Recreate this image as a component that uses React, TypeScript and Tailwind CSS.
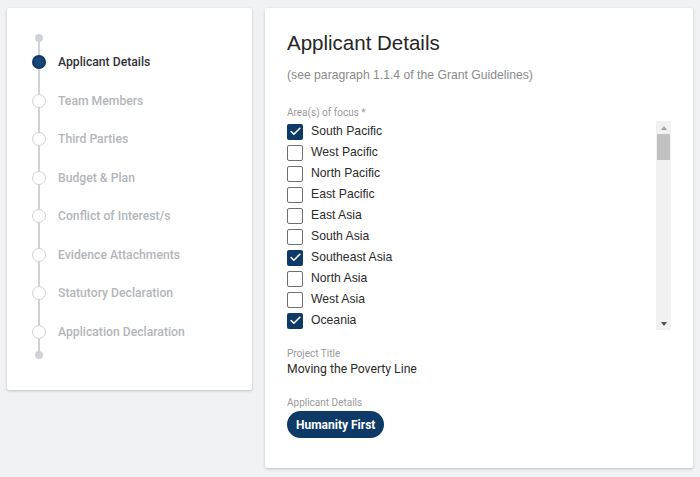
import { Check } from 'lucide-react'

const steps = [
  'Applicant Details',
  'Team Members',
  'Third Parties',
  'Budget & Plan',
  'Conflict of Interest/s',
  'Evidence Attachments',
  'Statutory Declaration',
  'Application Declaration',
]

const areas = [
  { name: 'South Pacific', checked: true },
  { name: 'West Pacific', checked: false },
  { name: 'North Pacific', checked: false },
  { name: 'East Pacific', checked: false },
  { name: 'East Asia', checked: false },
  { name: 'South Asia', checked: false },
  { name: 'Southeast Asia', checked: true },
  { name: 'North Asia', checked: false },
  { name: 'West Asia', checked: false },
  { name: 'Oceania', checked: true },
]

function Stepper() {
  return (
    <div className="relative pl-[25px] pt-[26px] pb-[31px]">
      {/* Track */}
      <div className="absolute left-[31px] top-[29px] bottom-[35px] w-[2px] bg-[#cfd3d8]" />

      <div className="relative flex w-[14px] justify-center">
        <span className="h-[8px] w-[8px] rounded-full bg-[#cfd3d8]" />
      </div>

      <ul className="relative mt-[1px]">
        {steps.map((step, i) => (
          <li key={step} className="flex h-[38.5px] items-center gap-[12px]">
            <span className="flex w-[14px] justify-center">
              {i === 0 ? (
                <span className="h-[14px] w-[14px] rounded-full border-[2px] border-[#0c3766] bg-[#174877]" />
              ) : (
                <span className="h-[14px] w-[14px] rounded-full border-[1.5px] border-[#cfd3d8] bg-white" />
              )}
            </span>
            <span
              className={
                i === 0
                  ? 'text-[12.2px] font-medium text-[#2f3236]'
                  : 'text-[12.2px] font-medium text-[#b3b6ba]'
              }
            >
              {step}
            </span>
          </li>
        ))}
      </ul>

      <div className="relative flex w-[14px] justify-center">
        <span className="h-[8px] w-[8px] rounded-full bg-[#cfd3d8]" />
      </div>
    </div>
  )
}

function Checkbox({ checked }: { checked: boolean }) {
  if (checked) {
    return (
      <span className="flex h-[16px] w-[16px] items-center justify-center rounded-[2px] bg-[#0e3a68]">
        <Check className="h-[13px] w-[13px] text-white" strokeWidth={3} />
      </span>
    )
  }
  return <span className="h-[16px] w-[16px] rounded-[2px] border-[1.5px] border-[#6f6f6f] bg-white" />
}

function FakeScrollbar() {
  return (
    <div className="flex w-[15px] flex-col bg-[#f1f1f1]">
      <div className="flex h-[13px] items-center justify-center">
        <span className="h-0 w-0 border-x-[3.5px] border-b-[4px] border-x-transparent border-b-[#a3a3a3]" />
      </div>
      <div className="mx-[1px] h-[26px] bg-[#c1c1c1]" />
      <div className="flex-1" />
      <div className="flex h-[13px] items-center justify-center">
        <span className="h-0 w-0 border-x-[3.5px] border-t-[4px] border-x-transparent border-t-[#505050]" />
      </div>
    </div>
  )
}

export default function App() {
  return (
    <div className="flex min-h-[477px] items-start gap-[13px] bg-[#f1f2f4] px-[7px] pt-[8px] font-['Roboto',sans-serif]">
      {/* Steps */}
      <aside className="w-[245px] rounded-[2px] bg-white shadow-[0_1px_3px_rgba(0,0,0,0.22)]">
        <Stepper />
      </aside>

      {/* Form */}
      <main className="w-[428px] rounded-[2px] bg-white px-[22px] pt-[22px] pb-[30px] shadow-[0_1px_3px_rgba(0,0,0,0.22)]">
        <h1 className="font-['Liberation_Sans',Arial,sans-serif] text-[20.5px] leading-[26px] text-[#262626]">
          Applicant Details
        </h1>
        <p className="mt-[11px] font-['Liberation_Sans',Arial,sans-serif] text-[12.2px] leading-[16px] text-[#8a8a8a]">
          (see paragraph 1.1.4 of the Grant Guidelines)
        </p>

        <label className="mt-[24px] block text-[10px] leading-[12px] text-[#9a9a9a]">Area(s) of focus *</label>
        <div className="mt-[2px] flex h-[209px]">
          <ul className="flex-1">
            {areas.map((a) => (
              <li key={a.name} className="flex h-[21px] items-center gap-[8px]">
                <Checkbox checked={a.checked} />
                <span className="font-['Liberation_Sans',Arial,sans-serif] text-[12.2px] text-[#2b2b2b]">
                  {a.name}
                </span>
              </li>
            ))}
          </ul>
          <FakeScrollbar />
        </div>

        <div className="mt-[18px] text-[10px] leading-[12px] text-[#9a9a9a]">Project Title</div>
        <div className="mt-[1px] text-[12.2px] leading-[16px] text-[#2b2b2b]">Moving the Poverty Line</div>

        <div className="mt-[20px] text-[10px] leading-[12px] text-[#9a9a9a]">Applicant Details</div>
        <span className="mt-[2px] inline-flex h-[27px] items-center rounded-full bg-[#0e3a68] px-[9px] text-[12px] font-bold text-white">
          Humanity First
        </span>
      </main>
    </div>
  )
}
